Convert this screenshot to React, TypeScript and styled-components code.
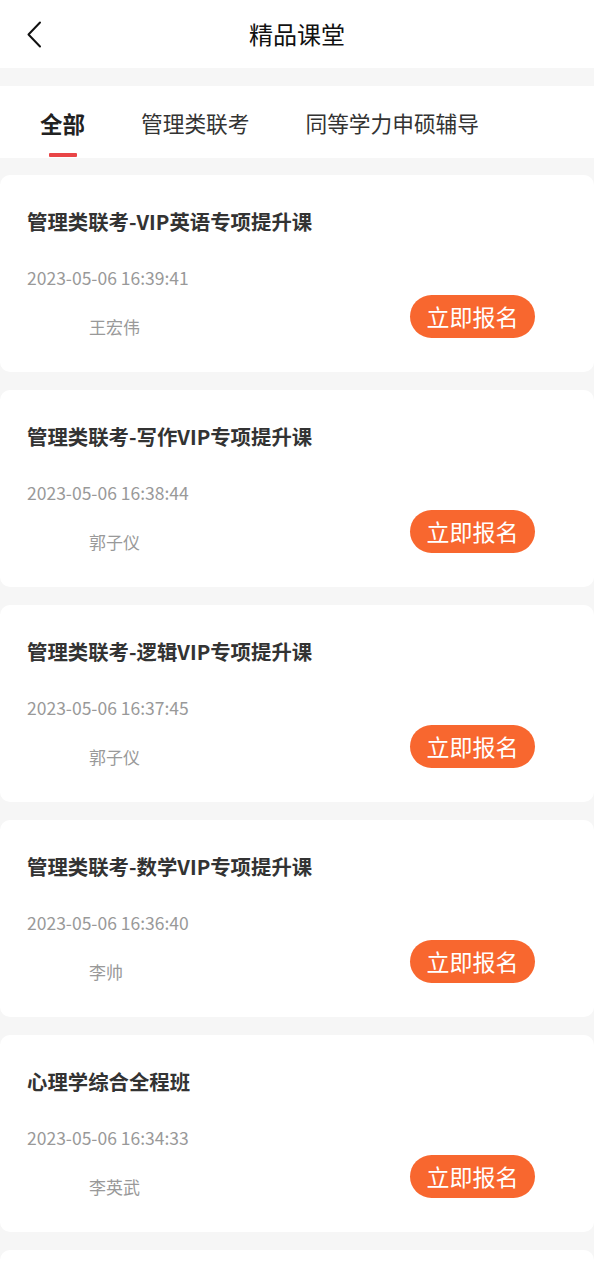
import React from "react";
import styled, { createGlobalStyle } from "styled-components";

const Global = createGlobalStyle`
  html, body { margin: 0; padding: 0; background: #f6f6f6; }
  body { font-family: "Noto Sans CJK SC", "Noto Sans", sans-serif; }
  * { box-sizing: border-box; }
`;

const Page = styled.div`
  width: 594px;
  height: 1280px;
  overflow: hidden;
  background: #f6f6f6;
  display: flex;
  flex-direction: column;
`;

const Header = styled.header`
  height: 68px;
  flex-shrink: 0;
  background: #fff;
  display: flex;
  align-items: center;
  justify-content: center;
  position: relative;
`;

const BackButton = styled.button`
  position: absolute;
  left: 22px;
  top: 18px;
  width: 24px;
  height: 32px;
  border: 0;
  padding: 0;
  background: transparent;
  display: flex;
  align-items: center;
  justify-content: center;
`;

const Title = styled.h1`
  margin: 0;
  font-size: 24px;
  font-weight: 400;
  color: #111;
  line-height: 32px;
`;

const Tabs = styled.nav`
  margin-top: 18px;
  height: 72px;
  flex-shrink: 0;
  background: #fff;
  display: flex;
  gap: 56px;
  padding: 22px 0 0 40px;
`;

const Tab = styled.div<{ $active?: boolean }>`
  display: flex;
  flex-direction: column;
  align-items: center;
  font-size: ${(p) => (p.$active ? "22.5px" : "21.7px")};
  font-weight: ${(p) => (p.$active ? 700 : 400)};
  color: ${(p) => (p.$active ? "#222" : "#333")};
  line-height: 30px;
  &::after {
    content: "";
    display: block;
    width: 28px;
    height: 4px;
    margin-top: 15px;
    background: ${(p) => (p.$active ? "#e94547" : "transparent")};
    border-radius: 1px;
  }
`;

const List = styled.div`
  margin-top: 17px;
  display: flex;
  flex-direction: column;
  gap: 18px;
`;

const Card = styled.div`
  height: 197px;
  background: #fff;
  border-radius: 10px;
  padding: 28px 59px 0 27px;
  display: flex;
  flex-direction: column;
  flex-shrink: 0;
`;

const CourseTitle = styled.div`
  font-size: 20.4px;
  font-weight: 700;
  color: #333;
  line-height: 36px;
`;

const DateText = styled.div`
  margin-top: 27px;
  font-size: 17.5px;
  color: #999;
  line-height: 24px;
`;

const Bottom = styled.div`
  margin-top: 5px;
  display: flex;
  align-items: flex-end;
  justify-content: space-between;
`;

const Teacher = styled.div`
  margin-left: 62px;
  font-size: 17px;
  color: #999;
  line-height: 24px;
`;

const Enroll = styled.button`
  width: 125px;
  height: 43px;
  border: 0;
  border-radius: 22px;
  background: #f8672f;
  color: #fff;
  font-family: inherit;
  font-size: 23px;
  line-height: 43px;
  padding: 0;
  margin-bottom: 1px;
`;

const courses = [
  { title: "管理类联考-VIP英语专项提升课", date: "2023-05-06 16:39:41", teacher: "王宏伟" },
  { title: "管理类联考-写作VIP专项提升课", date: "2023-05-06 16:38:44", teacher: "郭子仪" },
  { title: "管理类联考-逻辑VIP专项提升课", date: "2023-05-06 16:37:45", teacher: "郭子仪" },
  { title: "管理类联考-数学VIP专项提升课", date: "2023-05-06 16:36:40", teacher: "李帅" },
  { title: "心理学综合全程班", date: "2023-05-06 16:34:33", teacher: "李英武" },
  { title: "", date: "", teacher: "" },
];

export default function App() {
  return (
    <>
      <Global />
      <Page>
        <Header>
          <BackButton aria-label="返回">
            <svg width="16" height="27" viewBox="0 0 16 27" fill="none">
              <path d="M14 1.5 L2.5 13.5 L14 25.5" stroke="#111" strokeWidth="2" strokeLinecap="round" strokeLinejoin="round" />
            </svg>
          </BackButton>
          <Title>精品课堂</Title>
        </Header>
        <Tabs>
          <Tab $active>全部</Tab>
          <Tab>管理类联考</Tab>
          <Tab>同等学力申硕辅导</Tab>
        </Tabs>
        <List>
          {courses.map((c, i) => (
            <Card key={i}>
              {c.title && (
                <>
                  <CourseTitle>{c.title}</CourseTitle>
                  <DateText>{c.date}</DateText>
                  <Bottom>
                    <Teacher>{c.teacher}</Teacher>
                    <Enroll>立即报名</Enroll>
                  </Bottom>
                </>
              )}
            </Card>
          ))}
        </List>
      </Page>
    </>
  );
}
